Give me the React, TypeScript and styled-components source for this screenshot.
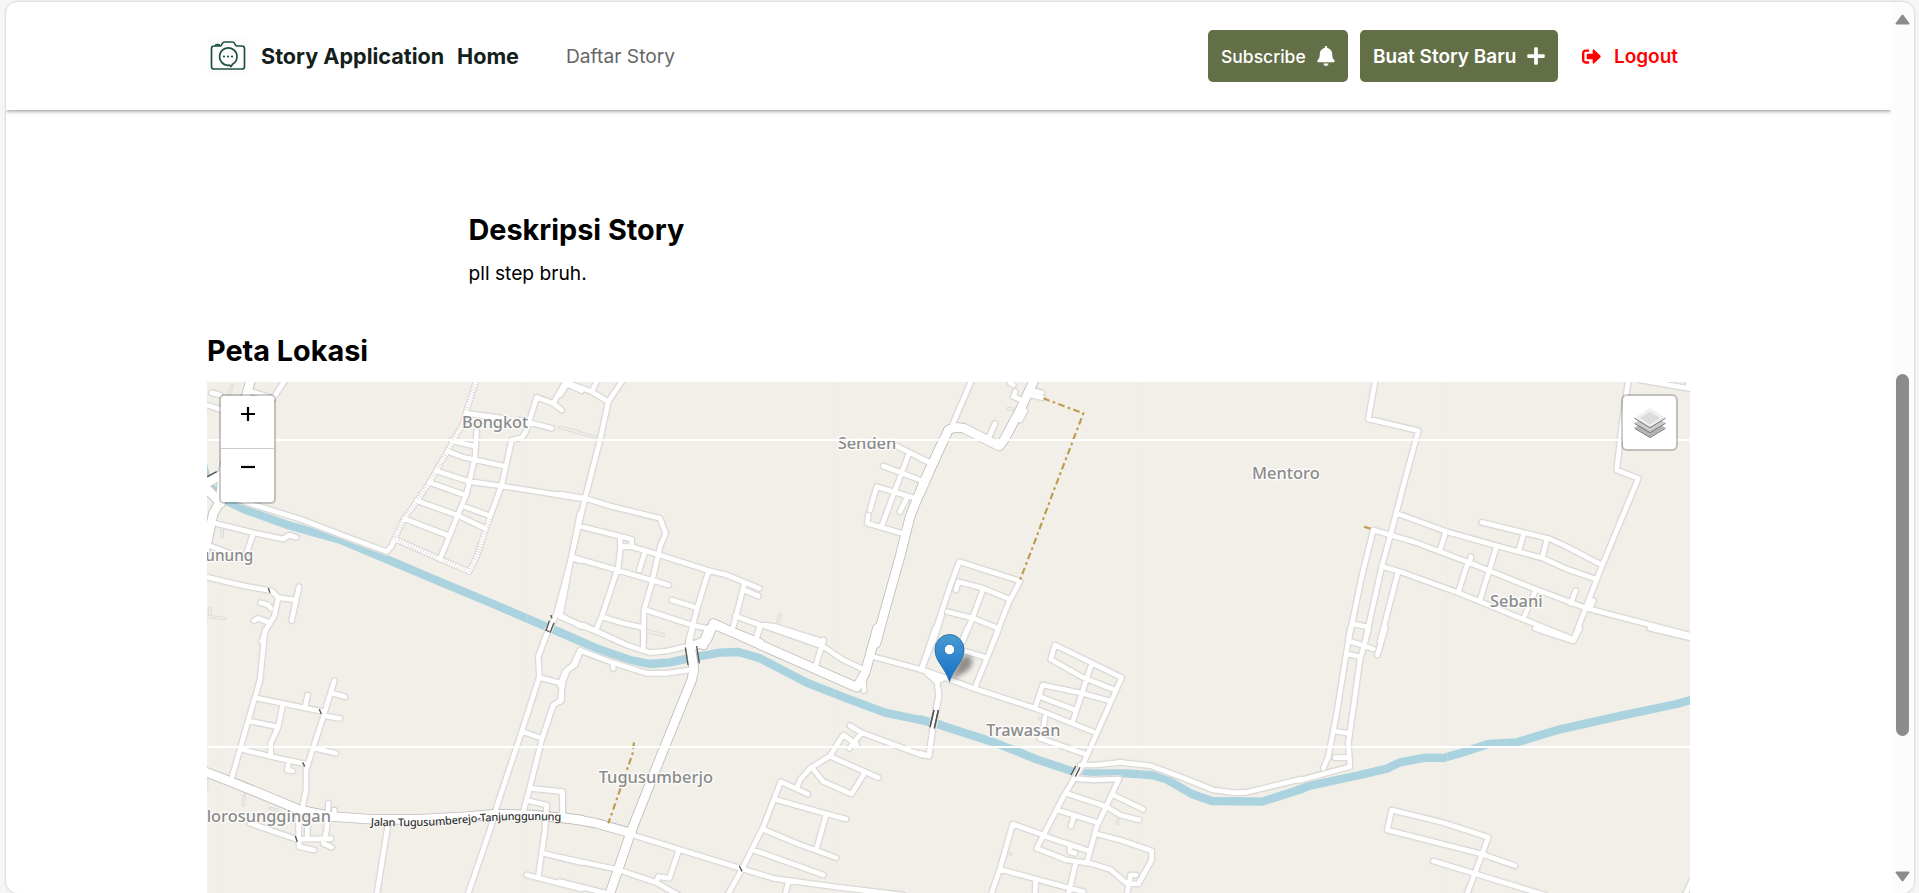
import React from "react";
import styled, { createGlobalStyle } from "styled-components";
import { FaBell, FaPlus, FaSignOutAlt } from "react-icons/fa";

const GlobalStyle = createGlobalStyle`
  *, *::before, *::after { box-sizing: border-box; }
  body {
    margin: 0;
    overflow: hidden;
    background: #f6f6f6;
    font-family: Inter, "Liberation Sans", sans-serif;
    color: #000;
  }
`;

const Window = styled.div`
  height: 893px;
  padding: 2px 5px 0 6px;
`;

const Frame = styled.div`
  display: flex;
  height: 100%;
  overflow: hidden;
  background: #fff;
  border-radius: 12px;
  box-shadow: 0 0 2px 1px rgba(0, 0, 0, 0.12);
`;

const Page = styled.div`
  flex: 1;
  min-width: 0;
  overflow: hidden;
`;

const Header = styled.header`
  height: 108px;
  background: #fff;
  box-shadow: 0 1px 4px rgba(0, 0, 0, 0.45);
`;

const Container = styled.div`
  width: 1483px;
  margin: 0 auto;
`;

const HeaderRow = styled(Container)`
  display: flex;
  align-items: center;
  height: 100%;
`;

const Brand = styled.a`
  display: flex;
  align-items: center;
  gap: 12px;
  width: 250px;
  color: #14201a;
  font-size: 21.6px;
  font-weight: 700;
  white-space: nowrap;
`;

const LogoBox = styled.span`
  display: flex;
  width: 42px;
  height: 42px;
  background: #fdfcfb;
`;

const NavLink = styled.a<{ $active?: boolean; $width: number }>`
  width: ${(p) => p.$width}px;
  color: ${(p) => (p.$active ? "#14201a" : "#666")};
  font-size: ${(p) => (p.$active ? 21.6 : 19.2)}px;
  font-weight: ${(p) => (p.$active ? 700 : 400)};
  white-space: nowrap;
`;

const Actions = styled.div`
  display: flex;
  align-items: center;
  gap: 12px;
  margin-left: auto;
`;

const Button = styled.button<{ $width: number; $plain?: boolean; $size?: number; $weight?: number }>`
  display: flex;
  align-items: center;
  justify-content: space-between;
  width: ${(p) => p.$width}px;
  height: 52px;
  padding: 0 12px 0 ${(p) => (p.$plain ? 12 : 13)}px;
  border: 0;
  border-radius: 5px;
  background: ${(p) => (p.$plain ? "transparent" : "#636f47")};
  color: ${(p) => (p.$plain ? "#f00" : "#fff")};
  font: ${(p) => p.$weight ?? 600} ${(p) => p.$size ?? 19}px Inter, sans-serif;
  white-space: nowrap;
  svg { flex: none; }
`;

const Description = styled.section`
  width: 960px;
  margin: 0 auto;
  padding-top: 102px;
`;

const Heading = styled.h2`
  margin: 0;
  font-size: 28.8px;
  font-weight: 700;
  line-height: 36px;
`;

const Body = styled.p`
  margin: 13px 0 0;
  font-size: 19.2px;
  line-height: 24px;
`;

const Location = styled(Container)`
  padding-top: 48px;
`;

const MapView = styled.div`
  position: relative;
  height: 528px;
  margin-top: 13px;
  overflow: hidden;
  background: #f2efe9;
`;

const MapCanvas = styled.svg`
  display: block;
  width: 1483px;
  height: 511px;
`;

const ZoomControl = styled.div`
  position: absolute;
  top: 12px;
  left: 12px;
  width: 57px;
  border: 2px solid rgba(0, 0, 0, 0.2);
  border-radius: 5px;
  background: #fff;
  background-clip: padding-box;
`;

const ZoomButton = styled.button`
  display: flex;
  justify-content: center;
  width: 100%;
  height: 52px;
  padding: 10px 0 0;
  border: 0;
  background: none;
  & + & { border-top: 1px solid #ccc; height: 54px; }
`;

const LayersControl = styled.div`
  position: absolute;
  top: 12px;
  right: 12px;
  display: flex;
  align-items: center;
  justify-content: center;
  width: 57px;
  height: 57px;
  border: 2px solid rgba(0, 0, 0, 0.2);
  border-radius: 6px;
  background: #fff;
  background-clip: padding-box;
`;

const Pin = styled.svg`
  position: absolute;
  left: 726px;
  top: 252px;
`;

const Scrollbar = styled.div`
  display: flex;
  flex-direction: column;
  align-items: center;
  width: 23px;
  padding: 12px 0 11px;
  background: #fcfcfc;
`;

const Thumb = styled.div`
  width: 13px;
  height: 362px;
  margin-top: 349px;
  margin-bottom: auto;
  border-radius: 7px;
  background: #8b8b8b;
`;

type Sector = {
  at: [number, number];
  minor?: string;
  dotted?: string;
  major?: string;
  service?: string;
  river?: string;
  path?: string;
  bridge?: string;
};

/* Map geometry, in thirds of a pixel, split into sectors with their own origin. */
const sectors: Sector[] = [
  {
    at: [-21, -36],
    river:
      "M8 280L25 345L75 390L130 417L260 464L420 509L540 559L700 627L880 702L980 745L1080 787",
    major: "M152 30L130 110L95 220L70 300L60 395L40 430L25 500L10 560M10 345L85 302M10 345L62 400",
    minor:
      "M120 390L160 404L300 447L420 493L560 545L575 528L580 515M870 440L905 345L935 210L965 203L978 185L1010 82L1060 100L1085 120M1060 100L1100 30M1095 40L1145 62M1140 430L1115 560L1070 730L1030 815M1070 730L1145 770M1115 565L1145 573M800 130L910 145M960 150L1055 175M830 185L825 260L800 370L720 567M755 212L820 228M745 245L790 262L910 288M710 303L810 335L905 348L1140 385M690 338L795 375M650 392L770 435L855 475M790 408L868 437M615 447L740 495M35 68L60 75M20 105L60 118M155 65L220 85L255 30M45 460L160 488L250 507L268 495L288 502M160 488L140 550M22 525L90 550M15 620L120 645L215 663L235 683L288 690M297 650L275 752M235 683L222 740L200 775L185 815M182 698L205 705L212 715M162 752L175 745L200 755",
    dotted:
      "M580 515L610 450L650 395L690 335L710 300L750 230L790 160L800 120L830 30M590 510L720 567L808 605L830 560L870 440",
    service: "M1085 172L1140 187M97 45L85 80M67 480L67 500M22 740L75 746M30 715L30 735",
    bridge: "M1048 752L1038 782M1062 758L1050 788M22 320L50 305M205 655L210 668M1052 735L1056 745",
  },
  {
    at: [1059, -36],
    major:
      "M430 825L445 780L465 765L600 820M1150 210L1090 340L1050 440L1020 560L975 720L948 820",
    minor:
      "M0 75L25 36M25 40L95 65L145 95M95 65L112 30M188 30L145 95L120 210L75 385L35 555L0 740M0 372L75 385L150 408L300 445L317 490L300 530L275 640L252 720L250 815M58 468L215 508L215 530L290 552L440 600L500 615L598 655M180 505L182 530L215 530M182 530L175 590L125 740L108 780M255 545L238 600M38 562L170 600L325 645M445 605L410 720L385 815M335 690L410 713M258 720L395 765L440 775M0 740L110 785L190 820M125 740L190 760L250 773M552 645L520 770M552 660L595 678M525 738L600 765L640 768L790 815M600 765L585 815M1010 228L1110 278M1045 255L965 468M970 288L1085 332M930 420L950 350L1065 385M1040 385L1020 425M925 435L922 460L1025 490M1145 735L1120 815",
    service: "M0 172L110 203M660 735L652 762M260 785L310 795",
  },
  {
    at: [2139, -36],
    major: "M0 370L30 300L85 180L105 172L130 174L238 228L255 205L300 120L345 25",
    minor:
      "M155 30L95 170M210 195L225 160M270 38L280 45M368 83L330 75M365 68L330 60M300 88L280 80L285 65M300 150L315 122M35 815L90 650L118 575L300 633L265 700L220 815M108 660L115 635L190 655L270 688M190 655L155 750L128 815M82 725L160 745L235 775M0 265L30 278",
    path: "M370 85L490 130L450 235L400 365L350 500L300 630",
    service: "M265 115L280 118",
  },
  {
    at: [3279, -36],
    minor:
      "M226 30L205 147L355 182L320 310L270 500L245 590L195 815M220 480L185 620L145 815M220 480L340 515L500 575L700 655L860 715L1175 797M290 430L440 485L600 530L730 565L800 597L890 628M545 457L750 507L800 530L905 585M437 487L418 545M588 535L540 690M670 495L657 540M740 510L728 560M503 580L475 665M513 560L508 580L525 583M250 590L300 605L480 670L650 740L820 808M985 30L965 170L950 300L1015 325L905 590L820 810M705 665L670 745M827 662L812 700M293 610L240 815M160 762L200 770M880 692L870 715M1020 30L1175 57M1165 40L1165 55",
    path: "M192 470L215 477",
  },
  {
    at: [-21, 744],
    major:
      "M10 423L130 470L300 540L400 560L520 568L650 568L800 560L890 552L1000 555L1145 570",
    minor:
      "M195 0L180 150L145 270L95 445M165 203L370 245M248 225L235 290L212 340L212 378M148 273L230 290M122 357L215 380L320 403M265 400L262 420L278 423M403 152L370 260L318 420L318 480L305 545M397 190L435 200M375 258L420 265M345 355L407 370M323 195L315 230M150 580L290 628L393 626M295 560L297 650L342 660M322 590L322 625M385 520L380 600L370 640L395 652M403 540L403 555M563 590L530 795M1045 0L1015 80L1018 140L965 305L890 530L870 600L803 795M1140 60L1120 105L1103 118L1085 165L1085 210L1060 225L1025 330L990 470L970 545M1020 143L1085 160M968 305L1025 325M990 475L1088 485L1088 550M985 512L1040 525L1035 600L1015 740M1030 670L1145 698M980 735L1145 777",
    service: "M133 495L130 525M210 535L230 540M20 450L20 475",
    bridge: "M358 238L364 252M308 397L314 409M286 618L292 636M1036 0L1048 5",
  },
  {
    at: [1059, 744],
    river:
      "M-5 5L110 55L210 90L270 102L330 97L400 82L480 68L535 66L600 85L740 158L860 205L975 248L1080 270L1145 285",
    major:
      "M457 -10L440 30L395 50M390 40L402 118L395 150L300 385L215 600L148 795M460 -20L600 44L890 172L915 130L952 -5M0 560L110 580L215 610",
    minor:
      "M70 -15L200 45L270 68L320 63L400 45M250 0L250 55M0 165L15 125L45 105L62 62L150 95L260 130L320 130L400 118M0 215L8 165M398 -5L388 40M600 -5L590 25M620 -10L790 50L850 90L910 118M790 30L768 105M940 80L1080 118L1145 140M1132 -5L1085 118M1100 128L1130 155L1137 190L1120 280L1107 378L1085 375L905 308L870 287M905 308L868 355M890 343L850 315L830 345L810 378L750 415L720 450L710 475M812 380L955 443M912 432L875 492L790 455L760 418M743 492L662 455L610 590L550 710L503 795M645 508L800 552L858 567M798 555L770 655M610 598L710 640L828 683M580 660L790 735M225 617L540 715L640 745L820 770L1030 795M685 755L675 795M355 665L328 745L295 740L288 755M0 682L170 718L290 758L355 795M0 755L150 792M158 100L160 115M0 485L8 490L8 550M910 150L912 182",
    path: "M222 337L218 370L180 480L145 580",
    bridge:
      "M376 52L384 105M410 48L418 100M1122 240L1110 292M1135 240L1123 295M538 708L546 724M0 562L0 578",
    service: "M250 0L310 14",
  },
  {
    at: [2139, 744],
    river:
      "M0 268L60 285L230 340L350 388L475 430L620 430L700 436L740 448L815 492L875 513L1025 515L1145 477",
    minor:
      "M0 118L80 145L160 175L345 235L525 308M46 -5L5 115M142 -5L128 30M237 -5L165 172M130 62L195 82M50 150L57 200L40 285L27 378L0 370M20 125L50 155M75 142L50 155M405 45L605 143L490 400L430 500L350 655L440 690L510 700L570 718L620 760L655 762L695 690L695 662L600 630L530 612M405 45L392 88L490 143L585 180M515 100L460 270M345 235L368 165L480 188L570 213M360 200L465 240M375 262L370 295M360 325L495 372M480 405L530 405L600 397L690 407L780 440L880 480L940 488L980 487L1145 447M460 445L520 450L597 447L530 590L500 700M580 495L670 538M438 490L560 530L600 555L658 570M412 540L530 577M460 565L453 588M375 617L278 582L240 715L213 795M370 617L505 662M450 650L450 665L465 670M240 718L450 775L490 785M467 700L445 795M347 755L345 795M620 795L632 735L648 735",
    bridge:
      "M467 408L453 435M480 412L466 440M42 240L30 290M55 240L43 295",
    service: "M258 668L272 672M595 565L592 580M358 265L366 268",
  },
  {
    at: [3279, 744],
    river:
      "M-5 480L30 467L180 435L260 416L300 397L375 383L430 384L490 367L565 342L650 337L780 298L950 260L1130 222L1180 208",
    minor:
      "M151 -5L110 250L85 380L70 415M206 -5L180 90L145 340L150 410L-5 452M256 -5L232 75M155 35L220 57M145 73L180 80M103 303L145 310M105 383L145 383M705 -5L820 33L840 -5M1050 -5L1175 25M262 600L275 540L430 578L565 622L500 795M262 600L545 672L645 707M400 693L735 795M1155 795L1175 752",
  },
];

type Layer = "minor" | "major" | "service" | "river" | "path" | "bridge" | "dotted";

const Strokes = ({ layer, color, width, dash, butt }: {
  layer: Layer; color: string; width: number; dash?: string; butt?: boolean;
}) => (
  <g fill="none" stroke={color} strokeWidth={width} strokeDasharray={dash}
    strokeLinejoin="round" strokeLinecap={butt ? "butt" : "round"}>
    {sectors.map((s, i) =>
      s[layer] ? <path key={i} d={s[layer]} transform={`translate(${s.at[0]} ${s.at[1]})`} /> : null
    )}
  </g>
);

const places = [
  { name: "Bongkot", x: 765, y: 139, w: 199 },
  { name: "Senden", x: 1892, y: 201, w: 176 },
  { name: "Mentoro", x: 3135, y: 291, w: 203 },
  { name: "Sebani", x: 3849, y: 675, w: 158 },
  { name: "unung", x: -5, y: 537, w: 144 },
  { name: "Trawasan", x: 2338, y: 1062, w: 222 },
  { name: "Tugusumberjo", x: 1175, y: 1202, w: 343 },
  { name: "lorosunggingan", x: -1, y: 1321, w: 373 },
];

const seams = [37, 959, 1880, 2800, 3721];

const StreetMap = () => (
  <MapCanvas viewBox="0 0 4449 1533">
    <rect width="4449" height="1533" fill="#f2efe9" />
    <Strokes layer="river" color="#aad3df" width={25} />
    <Strokes layer="service" color="#d9d8d5" width={10} />
    <Strokes layer="service" color="#eeedea" width={5} />
    <Strokes layer="minor" color="#e7e5e0" width={24} />
    <Strokes layer="dotted" color="#d6d4d2" width={19} />
    <Strokes layer="minor" color="#d6d5d3" width={19} />
    <Strokes layer="major" color="#bfbdba" width={31} />
    <Strokes layer="minor" color="#fff" width={14} />
    <Strokes layer="dotted" color="#fff" width={14} dash="6 2" butt />
    <Strokes layer="major" color="#fff" width={26} />
    <Strokes layer="path" color="#bf9b50" width={6.5} dash="20 10 8 10" butt />
    <Strokes layer="bridge" color="#555" width={4} butt />
    {seams.map((x) => (
      <rect key={x} x={x} y="0" width="2" height="1533" fill="#e9e8e3" opacity="0.4" />
    ))}
    <g fontFamily='"Noto Sans", sans-serif' fontSize="49" fontWeight="500" fill="#8b8b8b" stroke="#fff"
      strokeOpacity="0.75" strokeWidth="9" strokeLinejoin="round" paintOrder="stroke">
      {places.map((p) => (
        <text key={p.name} x={p.x} y={p.y} textLength={p.w} lengthAdjust="spacingAndGlyphs">{p.name}</text>
      ))}
    </g>
    <path id="street" d="M491 1331Q640 1337 780 1323T1064 1317" fill="none" />
    <text fontFamily='"Noto Sans", sans-serif' fontSize="33" fontWeight="500" fill="#333" stroke="#fff"
      strokeOpacity="0.7" strokeWidth="5" paintOrder="stroke">
      <textPath href="#street" textLength="572">Jalan Tugusumberejo-Tanjunggunung</textPath>
    </text>
    <rect y="171" width="4449" height="6" fill="#fff" />
    <rect y="1092" width="4449" height="6" fill="#fff" />
  </MapCanvas>
);

const MarkerPin = () => (
  <Pin width="54" height="52" viewBox="0 0 54 52">
    <defs>
      <linearGradient id="pin" x1="0" y1="0" x2="0" y2="1">
        <stop offset="0" stopColor="#4a9bd2" />
        <stop offset="1" stopColor="#1570c8" />
      </linearGradient>
      <filter id="soft" x="-30%" y="-30%" width="160%" height="160%">
        <feGaussianBlur stdDeviation="2.8" />
      </filter>
    </defs>
    <path d="M17 47L26 26Q33 18 38 23Q42 30 34 37Z" fill="#000" opacity="0.4" filter="url(#soft)" />
    <path d="M16.500 47.500C14 40 11 36 7.500 30.500C4.500 26 2 21.500 2 15.500A14.500 15 0 0 1 31 15.500C31 21.500 28.500 26 25.500 30.500C22 36 19 40 16.500 47.500Z"
      fill="url(#pin)" stroke="#2e72a6" />
    <circle cx="16.500" cy="15.500" r="5.200" fill="#fff" stroke="#2f7fbd" />
  </Pin>
);

const CameraLogo = () => (
  <svg width="42" height="42" viewBox="0 0 42 42" fill="none" stroke="#1b5145" strokeWidth="1.700"
    strokeLinejoin="round" strokeLinecap="round">
    <path d="M7 11H13.500C15 11 14.800 7 17 7H26C28 7 28 11 29.500 11H35Q37.500 11 37.500 13.500V31.500Q37.500 34 35 34H7Q4.500 34 4.500 31.500V13.500Q4.500 11 7 11Z" />
    <path d="M8.500 10.500Q8.500 9.600 10 9.600H11.500Q12.500 9.600 12.500 10.500" />
    <path d="M22.500 30.200A8.700 8.700 0 1 1 25.500 29.200L24 31.600Z" />
    <g fill="#1b5145" stroke="none">
      <circle cx="17" cy="21.500" r="1.100" />
      <circle cx="21" cy="21.500" r="1.100" />
      <circle cx="25" cy="21.500" r="1.100" />
    </g>
  </svg>
);

const LayersIcon = () => (
  <svg width="32" height="32" viewBox="0 0 32 32">
    <path d="M.5 20.800L16 12L31.500 20.800L16 30.300Z" fill="#b4b4b4" />
    <path d="M.5 21.300L16 30.500L31.500 21.300" fill="none" stroke="#777" />
    <path d="M.5 16L16 7L31.500 16L16 25.500Z" fill="#c9c9c9" />
    <path d="M.5 16.300L16 25.700L31.500 16.300" fill="none" stroke="#777" />
    <path d="M.5 11L16 .8L31.500 11L16 20.500Z" fill="#efefef" />
    <path d="M6 11L16 5L26 11L16 17.500Z" fill="#dcdcdc" />
    <path d="M.5 11.200L16 20.700L31.500 11.200" fill="none" stroke="#777" />
  </svg>
);

export default function App() {
  return (
    <Window>
      <GlobalStyle />
      <Frame>
        <Page>
          <Header>
            <HeaderRow>
              <Brand>
                <LogoBox><CameraLogo /></LogoBox>
                Story Application
              </Brand>
              <NavLink $active $width={109}>Home</NavLink>
              <NavLink $width={120}>Daftar Story</NavLink>
              <Actions>
                <Button $width={140} $size={17.5} $weight={500}>Subscribe <FaBell size={20} /></Button>
                <Button $width={198}>Buat Story Baru <FaPlus size={20} /></Button>
                <Button $width={120} $plain><FaSignOutAlt size={19} /> Logout</Button>
              </Actions>
            </HeaderRow>
          </Header>
          <Description>
            <Heading>Deskripsi Story</Heading>
            <Body>pll step bruh.</Body>
          </Description>
          <Location>
            <Heading>Peta Lokasi</Heading>
            <MapView>
              <StreetMap />
              <MarkerPin />
              <ZoomControl>
                <ZoomButton>
                  <svg width="16" height="16" stroke="#000" strokeWidth="2.200"><path d="M1 8H15M8 1V15" /></svg>
                </ZoomButton>
                <ZoomButton>
                  <svg width="16" height="16" stroke="#000" strokeWidth="2.200"><path d="M1 8H15" /></svg>
                </ZoomButton>
              </ZoomControl>
              <LayersControl><LayersIcon /></LayersControl>
            </MapView>
          </Location>
        </Page>
        <Scrollbar>
          <svg width="15" height="11" viewBox="0 0 15 11"><path d="M7.500 1.500L13.500 9.500H1.500Z" fill="#8b8b8b" stroke="#8b8b8b" strokeWidth="2" strokeLinejoin="round" /></svg>
          <Thumb />
          <svg width="15" height="11" viewBox="0 0 15 11"><path d="M7.500 9.500L13.500 1.500H1.500Z" fill="#8b8b8b" stroke="#8b8b8b" strokeWidth="2" strokeLinejoin="round" /></svg>
        </Scrollbar>
      </Frame>
    </Window>
  );
}
